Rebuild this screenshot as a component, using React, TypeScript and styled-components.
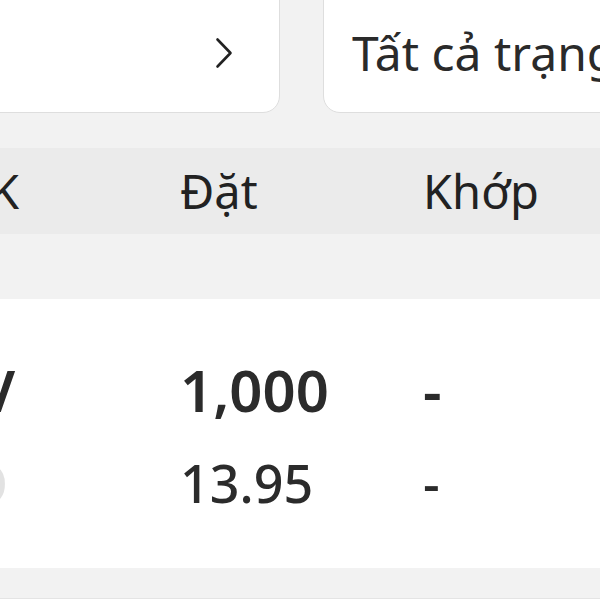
import React from "react";
import styled, { createGlobalStyle } from "styled-components";

const GlobalStyle = createGlobalStyle`
  html, body {
    margin: 0;
    padding: 0;
    background: #f2f2f2;
    overflow: hidden;
  }
  body {
    font-family: "Noto Sans", "Open Sans", sans-serif;
    color: #262626;
  }
`;

const Page = styled.div`
  width: 600px;
  height: 600px;
  overflow: hidden;
  background: #f2f2f2;
`;

const Canvas = styled.div`
  margin-left: -160px;
  width: 920px;
  display: flex;
  flex-direction: column;
`;

const FilterRow = styled.div`
  display: flex;
  gap: 43px;
  margin-top: -20px;
`;

const FilterCard = styled.div<{ $width: number; $align: "start" | "end" }>`
  box-sizing: border-box;
  width: ${(p) => p.$width}px;
  height: 133px;
  padding-top: 12px;
  background: #ffffff;
  border: 1px solid #dedede;
  border-radius: 17px;
  display: flex;
  align-items: center;
  justify-content: ${(p) => (p.$align === "end" ? "flex-end" : "flex-start")};
  padding-left: ${(p) => (p.$align === "start" ? "28px" : "0")};
  padding-right: ${(p) => (p.$align === "end" ? "46px" : "0")};
  overflow: hidden;
`;

const FilterText = styled.span`
  font-size: 48px;
  line-height: 1;
  white-space: nowrap;
  color: #2a2a2a;
`;

const Chevron = styled.svg`
  display: block;
  width: 18px;
  height: 32px;
`;

const Columns = `
  display: grid;
  grid-template-columns: 340px 243px 1fr;
`;

const HeaderRow = styled.div`
  ${Columns}
  margin-top: 35px;
  height: 86px;
  align-items: center;
  background: #ebebeb;
`;

const HeaderCell = styled.div<{ $lead?: boolean }>`
  font-size: 47px;
  line-height: 1;
  color: #222222;
  white-space: nowrap;
  text-align: ${(p) => (p.$lead ? "right" : "left")};
  padding-right: ${(p) => (p.$lead ? "161px" : "0")};
`;

const DataCard = styled.div`
  margin-top: 65px;
  height: 269px;
  box-sizing: border-box;
  padding-top: 62px;
  background: #ffffff;
`;

const DataRow = styled.div<{ $gap: number }>`
  ${Columns}
  margin-bottom: ${(p) => p.$gap}px;
  align-items: center;
`;

const Cell = styled.div<{
  $size: number;
  $weight: number;
  $lead?: number;
  $muted?: boolean;
}>`
  font-size: ${(p) => p.$size}px;
  font-weight: ${(p) => p.$weight};
  line-height: 1;
  white-space: nowrap;
  text-align: ${(p) => (p.$lead !== undefined ? "right" : "left")};
  padding-right: ${(p) => p.$lead ?? 0}px;
  color: ${(p) => (p.$muted ? "#e2e2e2" : "#2b2b2b")};
`;

const NextCard = styled.div`
  margin-top: 30px;
  height: 40px;
  background: #ffffff;
  border-top: 1px solid #e4e4e4;
`;

export default function App() {
  return (
    <Page>
      <GlobalStyle />
      <Canvas>
        <FilterRow>
          <FilterCard $width={440} $align="end">
            <Chevron viewBox="0 0 18 32" fill="none">
              <path
                d="M2.5 2.5 L15.5 16 L2.5 29.5"
                stroke="#222"
                strokeWidth="2.6"
                strokeLinecap="round"
                strokeLinejoin="round"
              />
            </Chevron>
          </FilterCard>
          <FilterCard $width={420} $align="start">
            <FilterText>Tất cả trạng thái</FilterText>
          </FilterCard>
        </FilterRow>

        <HeaderRow>
          <HeaderCell $lead>Mã CK</HeaderCell>
          <HeaderCell>Đặt</HeaderCell>
          <HeaderCell>Khớp</HeaderCell>
        </HeaderRow>

        <DataCard>
          <DataRow $gap={38}>
            <Cell $size={58} $weight={600} $lead={165}>SHV</Cell>
            <Cell $size={58} $weight={600}>1,000</Cell>
            <Cell $size={58} $weight={600}>-</Cell>
          </DataRow>
          <DataRow $gap={0}>
            <Cell $size={52} $weight={500} $lead={172} $muted>LO</Cell>
            <Cell $size={52} $weight={500}>13.95</Cell>
            <Cell $size={52} $weight={500}>-</Cell>
          </DataRow>
        </DataCard>

        <NextCard />
      </Canvas>
    </Page>
  );
}
